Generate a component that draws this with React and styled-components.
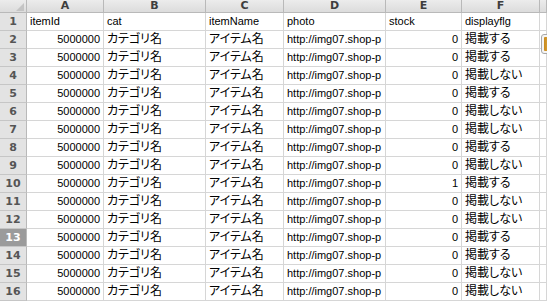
import React from "react";
import styled, { createGlobalStyle } from "styled-components";

const Global = createGlobalStyle`
  html, body { margin: 0; padding: 0; background: #fff; overflow: hidden; }
  body { width: 547px; height: 301px; }
`;

const Sheet = styled.div`
  position: relative;
  width: 547px;
  height: 301px;
  overflow: hidden;
  display: grid;
  grid-template-columns: 27px 77px 102px 78px 102px 76px 78px 1fr;
  grid-auto-rows: 18px;
  grid-template-rows: 13px;
  align-content: start;
  font-family: "Liberation Sans", "Noto Sans CJK JP", sans-serif;
  font-size: 11px;
  color: #000;
`;

const ColHead = styled.div`
  box-sizing: border-box;
  border-right: 1px solid #b9b9b9;
  border-bottom: 1px solid #b9b9b9;
  background: linear-gradient(#ececec, #dcdcdc);
  color: #3e3e3e;
  font-family: "DejaVu Sans", sans-serif;
  font-weight: bold;
  font-size: 11px;
  line-height: 12px;
  text-align: center;
  overflow: hidden;
`;

const Corner = styled(ColHead)`
  position: relative;
  &::after {
    content: "";
    position: absolute;
    right: 2px;
    bottom: 1px;
    width: 0;
    height: 0;
    border-left: 8px solid transparent;
    border-bottom: 8px solid #c4c4c4;
  }
`;

const RowHead = styled.div`
  box-sizing: border-box;
  border-right: 1px solid #b9b9b9;
  border-bottom: 1px solid #c6c6c6;
  background: ${(p) => (p.$active ? "#9b9b9b" : "#e3e3e3")};
  color: ${(p) => (p.$active ? "#fff" : "#555")};
  font-family: "DejaVu Sans", sans-serif;
  font-weight: bold;
  font-size: 11px;
  line-height: 17px;
  text-align: center;
  overflow: hidden;
`;

const Cell = styled.div`
  box-sizing: border-box;
  border-right: 1px solid #d6d6d6;
  border-bottom: 1px solid #d6d6d6;
  padding: 0 ${(p) => (p.$num ? "3px" : "0")} 0 3px;
  line-height: 17px;
  white-space: nowrap;
  overflow: hidden;
  text-align: ${(p) => (p.$num ? "right" : "left")};
  font-size: ${(p) => (p.$jp ? "12px" : "11px")};
  font-feature-settings: "palt";
`;

const PasteButton = styled.div`
  position: absolute;
  left: 541px;
  top: 34px;
  width: 14px;
  height: 20px;
  box-sizing: border-box;
  border: 1px solid #a8a8a8;
  border-radius: 3px;
  background: #f4f4f4;
  padding: 2px;
  &::after {
    content: "";
    display: block;
    width: 100%;
    height: 100%;
    border-radius: 1px;
    background: linear-gradient(90deg, #c88a1c, #e9b451);
  }
`;

const flags = [
  "掲載する", "掲載する", "掲載しない", "掲載する", "掲載しない", "掲載しない",
  "掲載する", "掲載しない", "掲載する", "掲載しない", "掲載しない", "掲載する",
  "掲載する", "掲載しない", "掲載しない",
];

const cols = ["A", "B", "C", "D", "E", "F", ""];

export default function App() {
  return (
    <>
      <Global />
      <Sheet>
        <Corner />
        {cols.map((c, i) => (
          <ColHead key={i}>{c}</ColHead>
        ))}

        <RowHead>1</RowHead>
        <Cell>itemId</Cell>
        <Cell>cat</Cell>
        <Cell>itemName</Cell>
        <Cell>photo</Cell>
        <Cell>stock</Cell>
        <Cell>displayflg</Cell>
        <Cell />

        {flags.map((f, i) => {
          const n = i + 2;
          return (
            <React.Fragment key={n}>
              <RowHead $active={n === 13}>{n}</RowHead>
              <Cell $num>5000000</Cell>
              <Cell $jp>カテゴリ名</Cell>
              <Cell $jp>アイテム名</Cell>
              <Cell>http://img07.shop-p</Cell>
              <Cell $num>{n === 10 ? 1 : 0}</Cell>
              <Cell $jp>{f}</Cell>
              <Cell />
            </React.Fragment>
          );
        })}
        <PasteButton />
      </Sheet>
    </>
  );
}
